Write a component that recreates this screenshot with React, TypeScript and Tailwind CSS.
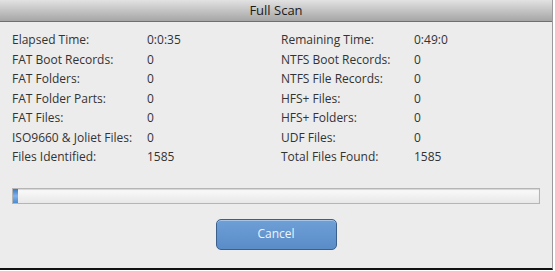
const left: [string, string][] = [
  ['Elapsed Time:', '0:0:35'],
  ['FAT Boot Records:', '0'],
  ['FAT Folders:', '0'],
  ['FAT Folder Parts:', '0'],
  ['FAT Files:', '0'],
  ['ISO9660 & Joliet Files:', '0'],
  ['Files Identified:', '1585'],
]

const right: [string, string][] = [
  ['Remaining Time:', '0:49:0'],
  ['NTFS Boot Records:', '0'],
  ['NTFS File Records:', '0'],
  ['HFS+ Files:', '0'],
  ['HFS+ Folders:', '0'],
  ['UDF Files:', '0'],
  ['Total Files Found:', '1585'],
]

export default function App() {
  return (
    <div className="w-[555px] h-[271px] bg-white font-['Open_Sans',sans-serif]">
      <div className="w-[553px] h-[270px] flex flex-col bg-[#ececec] border-r border-r-[#9a9a9a] border-b-2 border-b-[#111]">
        {/* タイトルバー */}
        <div className="h-[22px] shrink-0 flex items-center justify-center bg-gradient-to-b from-[#e2e2e2] to-[#a6a6a6] border-b border-[#6f6f6f] text-[13px] text-[#1a1a1a]">
          Full Scan
        </div>

        {/* 統計 */}
        <div className="pt-[8px] pl-[12px] grid grid-cols-[135px_134px_133px_1fr] text-[12px] leading-[19.5px] text-[#333]">
          {left.map(([l, v], i) => (
            <div key={i} className="contents">
              <div>{l}</div>
              <div>{v}</div>
              <div>{right[i][0]}</div>
              <div>{right[i][1]}</div>
            </div>
          ))}
        </div>

        {/* プログレスバー */}
        <div className="mt-[21px] mx-[12px] h-[16px] flex bg-gradient-to-b from-[#fbfbfb] to-[#e8e8e8] border border-[#b5b5b5] shadow-[inset_0_1px_1px_rgba(0,0,0,0.15)]">
          <div className="w-[5px] bg-gradient-to-b from-[#3f76c4] via-[#7fb4ec] to-[#4c8ad4]" />
        </div>

        <div className="flex justify-center mt-[15px]">
          <button className="w-[121px] h-[31px] rounded-[5px] border border-[#3c5f8c] bg-gradient-to-b from-[#6e9fd6] to-[#5a8cc8] text-[12px] text-[#eef4fb] shadow-[inset_0_1px_0_rgba(255,255,255,0.4)]">
            Cancel
          </button>
        </div>
      </div>
    </div>
  )
}
